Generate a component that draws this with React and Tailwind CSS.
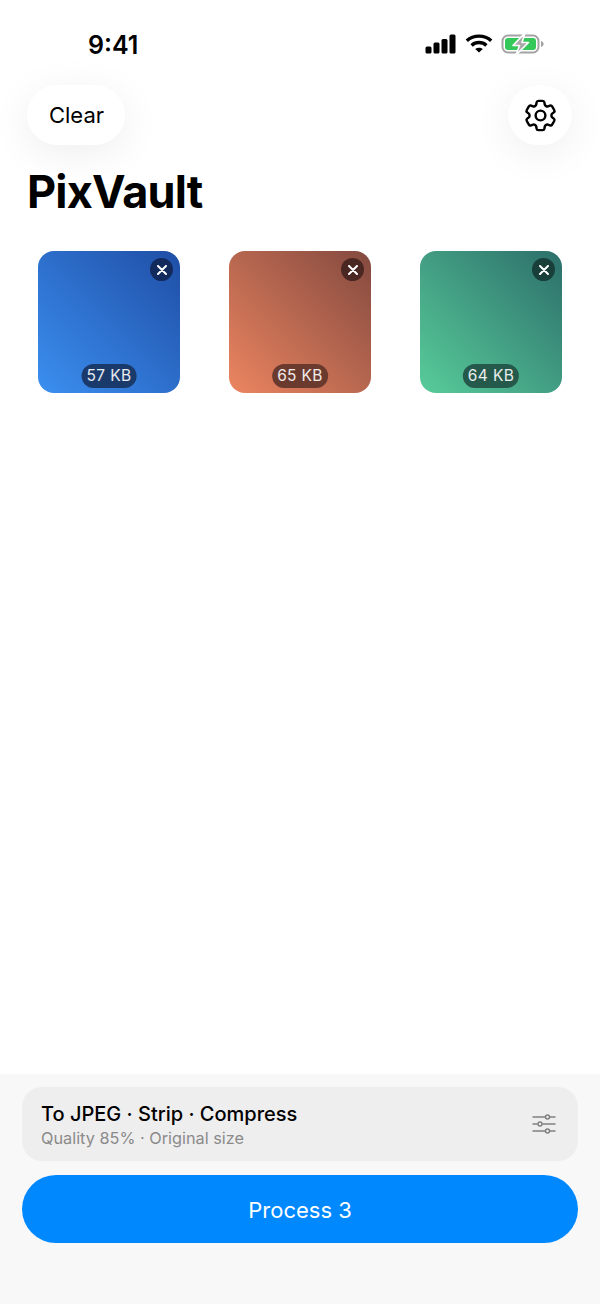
import React from 'react';

const photos = [
  { id: 1, size: '57 KB', bg: 'bg-[linear-gradient(to_top_right,#3b8ff0,#1f4ea6)]', pill: 'bg-[#1a3a6c]', close: 'bg-[#122a5c]' },
  { id: 2, size: '65 KB', bg: 'bg-[linear-gradient(to_top_right,#ec8560,#83493f)]', pill: 'bg-[#6b3a2e]', close: 'bg-[#4a2723]' },
  { id: 3, size: '64 KB', bg: 'bg-[linear-gradient(to_top_right,#58cc9a,#2c6e6a)]', pill: 'bg-[#25594b]', close: 'bg-[#193f3b]' },
];

const StatusIcons = () => (
  <div className="flex items-center gap-[8px]">
    {/* signal */}
    <svg width="31" height="20" viewBox="0 0 31 20" fill="#000" className="mr-[1px]">
      <rect x="0.5" y="12.5" width="6" height="7" rx="1.5" />
      <rect x="8.5" y="8.5" width="6" height="11" rx="1.5" />
      <rect x="16.5" y="5" width="6" height="14.5" rx="1.5" />
      <rect x="24.5" y="0.5" width="6" height="19" rx="1.5" />
    </svg>
    {/* wifi */}
    <svg width="28" height="20" viewBox="0 0 28 20" fill="none" stroke="#000" strokeWidth="3.4">
      <path d="M1.8 6.8C8.6 0.6 19.4 0.6 26.2 6.8" />
      <path d="M6.6 11.4C10.8 7.6 17.2 7.6 21.4 11.4" />
      <path d="M10.2 15L14 18.4L17.8 15C15.6 13.2 12.4 13.2 10.2 15Z" fill="#000" stroke="none" />
    </svg>
    {/* battery */}
    <svg width="44" height="20" viewBox="0 0 44 20" fill="none">
      <rect x="1.5" y="1.5" width="36" height="17" rx="5.5" stroke="#a3a3a3" strokeWidth="2" />
      <rect x="4" y="4" width="31" height="12" rx="3" fill="#34c759" />
      <path d="M40 7v6c1.6-.4 2.6-1.6 2.6-3S41.6 7.4 40 7Z" fill="#a3a3a3" />
      <path d="M24 -1L12 11.5H18.5L15 21L27.5 8.5H21Z" fill="#a9a9a9" stroke="#fff" strokeWidth="1.6" strokeLinejoin="round" />
    </svg>
  </div>
);

const Gear = () => (
  <svg width="39" height="39" viewBox="0 0 24 24" fill="none" stroke="#000" strokeWidth="1.5" strokeLinecap="round" strokeLinejoin="round">
    <path d="M9.594 3.94c.09-.542.56-.94 1.11-.94h2.593c.55 0 1.02.398 1.11.94l.213 1.281c.063.374.313.686.645.87.074.04.147.083.22.127.324.196.72.257 1.075.124l1.217-.456a1.125 1.125 0 0 1 1.37.49l1.296 2.247a1.125 1.125 0 0 1-.26 1.431l-1.003.827c-.293.24-.438.613-.431.992a6.759 6.759 0 0 1 0 .255c-.007.378.138.75.43.99l1.005.828c.424.35.534.954.26 1.43l-1.298 2.247a1.125 1.125 0 0 1-1.369.491l-1.217-.456c-.355-.133-.75-.072-1.076.124a6.57 6.57 0 0 1-.22.128c-.331.183-.581.495-.644.869l-.213 1.28c-.09.543-.56.941-1.11.941h-2.594c-.55 0-1.02-.398-1.11-.94l-.213-1.281c-.062-.374-.312-.686-.644-.87a6.52 6.52 0 0 1-.22-.127c-.325-.196-.72-.257-1.076-.124l-1.217.456a1.125 1.125 0 0 1-1.369-.49l-1.297-2.247a1.125 1.125 0 0 1 .26-1.431l1.004-.827c.292-.24.437-.613.43-.992a6.932 6.932 0 0 1 0-.255c.007-.378-.138-.75-.43-.99l-1.004-.828a1.125 1.125 0 0 1-.26-1.43l1.297-2.247a1.125 1.125 0 0 1 1.37-.491l1.216.456c.356.133.751.072 1.076-.124.072-.044.146-.087.22-.128.332-.183.582-.495.644-.869l.214-1.281Z" />
    <path d="M15 12a3 3 0 1 1-6 0 3 3 0 0 1 6 0Z" />
  </svg>
);

const Sliders = () => (
  <svg width="24" height="20" viewBox="0 0 24 20" fill="none" stroke="#808080" strokeWidth="1.5">
    <path d="M0.5 3H13M18 3H23.5M0.5 10H5.5M10.5 10H23.5M0.5 17H13M18 17H23.5" />
    <circle cx="15.5" cy="3" r="2" />
    <circle cx="8" cy="10" r="2" />
    <circle cx="15.5" cy="17" r="2" />
  </svg>
);

const Thumb = ({ photo }) => (
  <div className={`relative w-[142px] h-[142px] rounded-[16px] ${photo.bg}`}>
    <button className={`absolute top-[7px] right-[7px] w-[23px] h-[23px] rounded-full flex items-center justify-center ${photo.close}`}>
      <svg width="10" height="10" viewBox="0 0 10 10" stroke="#fff" strokeWidth="2" strokeLinecap="round">
        <path d="M1 1L9 9M9 1L1 9" />
      </svg>
    </button>
    <span className={`absolute bottom-[5px] left-1/2 -translate-x-1/2 h-[24px] px-[5px] rounded-full flex items-center whitespace-nowrap text-[15.5px] tracking-[0.35px] text-white/90 ${photo.pill}`}>
      {photo.size}
    </span>
  </div>
);

export default function App() {
  return (
    <div className="w-[600px] h-[1304px] flex flex-col overflow-hidden bg-white text-black font-['Inter',sans-serif]">
      {/* Status bar */}
      <div className="h-[85px] flex items-start justify-between pl-[88px] pr-[55px] pt-[29px]">
        <span className="text-[25px] leading-[32px] font-semibold">9:41</span>
        <div className="pt-[5px]">
          <StatusIcons />
        </div>
      </div>

      {/* Header */}
      <div className="flex items-center justify-between pl-[27px] pr-[28px]">
        <button className="w-[98px] h-[60px] pl-[1px] rounded-full bg-white text-[22px] shadow-[0_8px_40px_rgba(0,0,0,0.07)]">
          Clear
        </button>
        <button className="w-[64px] h-[60px] rounded-full bg-white flex items-center justify-center shadow-[0_8px_40px_rgba(0,0,0,0.07)]">
          <Gear />
        </button>
      </div>
      <h1 className="pl-[27px] mt-[18px] text-[45px] leading-[58px] font-bold tracking-[-0.8px]">PixVault</h1>

      {/* Photos */}
      <div className="mt-[30px] px-[38px] flex justify-between">
        {photos.map(photo => (
          <Thumb key={photo.id} photo={photo} />
        ))}
      </div>

      {/* Bottom panel */}
      <div className="mt-auto h-[230px] bg-[#f8f8f8] px-[22px] pt-[13px]">
        <div className="h-[74px] rounded-[20px] bg-[#eeeeee] pl-[19px] pr-[22px] flex items-center justify-between">
          <div className="pt-[1px]">
            <div className="text-[20px] leading-[26px] font-medium">To JPEG · Strip · Compress</div>
            <div className="text-[16.3px] leading-[22px] text-[#8a8a8a]">Quality 85% · Original size</div>
          </div>
          <Sliders />
        </div>
        <button className="mt-[14px] w-full h-[68px] pt-[2px] rounded-[34px] bg-[#0088ff] text-white text-[22px]">
          Process 3
        </button>
      </div>
    </div>
  );
}
